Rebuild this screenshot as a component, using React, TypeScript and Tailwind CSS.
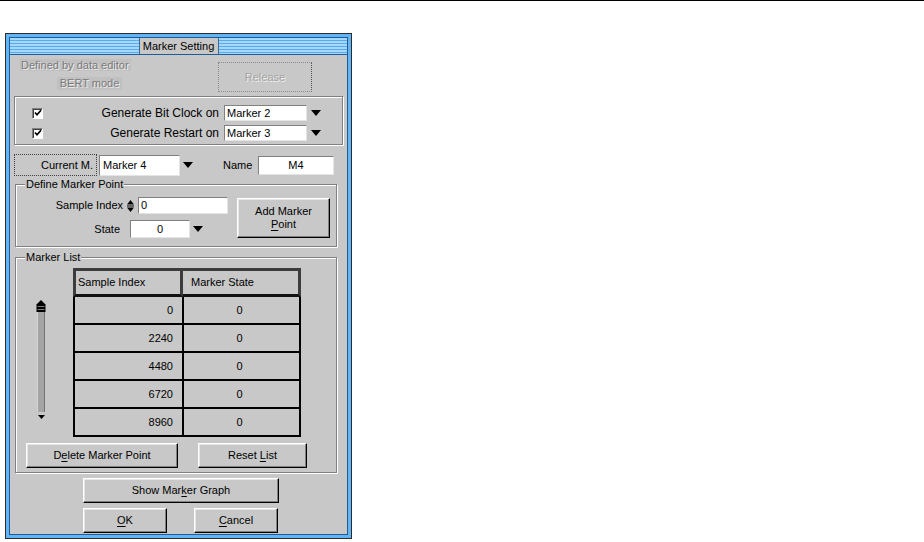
import React from "react";

const Arrow = () => (
  <svg width="10" height="6" viewBox="0 0 10 6" className="block">
    <polygon points="0,0 10,0 5,6" fill="#000" />
  </svg>
);

const Check = () => (
  <div className="w-[11px] h-[11px] bg-white border border-t-[#808080] border-l-[#808080] border-r-white border-b-white shadow-[inset_1px_1px_0_#404040] flex items-center justify-center">
    <svg width="8" height="8" viewBox="0 0 8 8" className="block">
      <path d="M1 3.5 L3 5.8 L7 1.2" fill="none" stroke="#000" strokeWidth="1.7" />
    </svg>
  </div>
);

const Btn = ({ className = "", children }: { className?: string; children: React.ReactNode }) => (
  <div
    className={
      "flex items-center justify-center text-center border border-t-white border-l-white border-r-black border-b-black shadow-[inset_-1px_-1px_0_#808080,inset_1px_1px_0_#e6e6e6] " +
      className
    }
  >
    {children}
  </div>
);

const Field = ({ className = "", children }: { className?: string; children?: React.ReactNode }) => (
  <div
    className={
      "flex items-center bg-white border border-t-[#808080] border-l-[#808080] border-r-[#e4e4e4] border-b-[#e4e4e4] " +
      className
    }
  >
    {children}
  </div>
);

const Group = ({
  title,
  className = "",
  children,
}: {
  title?: string;
  className?: string;
  children: React.ReactNode;
}) => (
  <div
    className={
      "relative border border-[#808080] shadow-[inset_1px_1px_0_#ffffff,1px_1px_0_#ffffff] " + className
    }
  >
    {title && (
      <div className="absolute -top-[7px] left-[9px] bg-[#c8c8c8] px-[1px] leading-[13px]">{title}</div>
    )}
    {children}
  </div>
);

const rows = ["0", "2240", "4480", "6720", "8960"];

export default function App() {
  return (
    <div className="w-[924px] h-[542px] bg-white overflow-hidden text-[11px] text-black font-['Liberation_Sans',Arial,sans-serif] leading-[13px]">
      <div className="h-px bg-black" />
      <div className="ml-[5px] mt-[32px] w-[347px] border border-[#2c2c2c] bg-[#62b4f4] p-[3px]">
        <div className="border border-[#1f5c98] bg-[#c8c8c8] flex flex-col">
          {/* title bar */}
          <div className="h-[17px] border-b border-[#1f5c98] bg-[repeating-linear-gradient(to_bottom,#a6d8fc_0px,#a6d8fc_2px,#58acee_2px,#58acee_3px)] flex justify-center">
            <div className="w-[80px] h-full bg-[#c8c8c8] border-x border-[#3a6a9a] flex items-center justify-center">
              Marker Setting
            </div>
          </div>

          {/* body */}
          <div className="flex flex-col pb-[1px]">
            {/* row A */}
            <div className="h-[41px] flex">
              <div className="ml-[10px] w-[111px] flex flex-col">
                <div className="mt-[4px] h-[12px] bg-[#c0c0c0] px-[1px] flex items-center text-[#7a7a7a] [text-shadow:1px_1px_0_#ececec]">
                  Defined by data editor
                </div>
                <div className="mt-[6px] ml-[37px] w-[65px] h-[13px] bg-[#c0c0c0] flex items-center justify-center text-[#7a7a7a] [text-shadow:1px_1px_0_#ececec]">
                  BERT mode
                </div>
              </div>
              <div className="ml-[87px] mt-[7px] w-[94px] h-[30px] border border-dotted border-[#8a8a8a] border-r-solid border-r-[#505050] flex items-center justify-center text-[#a4a4a4] [text-shadow:1px_1px_0_#f0f0f0]">
                Release
              </div>
            </div>

            {/* group 1 */}
            <Group className="ml-[4px] w-[329px] h-[49px] flex flex-col">
              <div className="mt-[8px] h-[16px] flex items-center">
                <div className="ml-[17px]">
                  <Check />
                </div>
                <div className="w-[176px] text-right text-[12px]">Generate Bit Clock on</div>
                <Field className="ml-[5px] w-[83px] h-[16px] pl-[2px]">Marker 2</Field>
                <div className="ml-[4px]">
                  <Arrow />
                </div>
              </div>
              <div className="mt-[4px] h-[16px] flex items-center">
                <div className="ml-[17px]">
                  <Check />
                </div>
                <div className="w-[176px] text-right text-[12px]">Generate Restart on</div>
                <Field className="ml-[5px] w-[83px] h-[16px] pl-[2px]">Marker 3</Field>
                <div className="ml-[4px]">
                  <Arrow />
                </div>
              </div>
            </Group>

            {/* current marker row */}
            <div className="mt-[9px] h-[22px] flex items-center">
              <div className="ml-[4px] w-[83px] h-[22px] border border-dotted border-[#404040] border-r-solid flex items-center justify-end pr-[3px]">
                Current M.
              </div>
              <Field className="ml-[2px] w-[81px] h-[21px] pl-[3px]">Marker 4</Field>
              <div className="ml-[3px]">
                <Arrow />
              </div>
              <div className="ml-[30px] w-[29px]">Name</div>
              <Field className="ml-[6px] w-[76px] h-[19px] justify-center">M4</Field>
            </div>

            {/* define marker point */}
            <Group title="Define Marker Point" className="mt-[8px] ml-[5px] w-[322px] h-[63px] flex pt-[12px]">
              <div className="flex flex-col">
                <div className="h-[17px] flex items-center">
                  <div className="w-[107px] text-right">Sample Index</div>
                  <svg width="7" height="14" viewBox="0 0 7 14" className="ml-[4px] block">
                    <polygon points="0,5.5 3.5,1 7,5.5" fill="#000" />
                    <rect x="0" y="6.5" width="7" height="1" fill="#000" />
                    <polygon points="0,8.5 7,8.5 3.5,13" fill="#000" />
                  </svg>
                  <Field className="ml-[4px] w-[90px] h-[17px] pl-[2px]">0</Field>
                </div>
                <div className="mt-[6px] h-[18px] flex items-center">
                  <div className="w-[104px] text-right">State</div>
                  <Field className="ml-[10px] w-[60px] h-[18px] justify-center">0</Field>
                  <div className="ml-[3px]">
                    <Arrow />
                  </div>
                </div>
              </div>
              <Btn className="ml-[9px] mt-[1px] w-[93px] h-[40px] flex-col leading-[13px]">
                <span>Add Marker</span>
                <span>
                  <span className="underline underline-offset-2">P</span>oint
                </span>
              </Btn>
            </Group>

            {/* marker list */}
            <Group title="Marker List" className="mt-[10px] ml-[5px] w-[322px] h-[216px] flex flex-col pt-[10px]">
              <div className="flex">
                {/* slider */}
                <div className="ml-[19px] mt-[32px] w-[12px] flex flex-col items-center">
                  <svg width="12" height="12" viewBox="0 0 12 12" className="block">
                    <polygon points="6,0 10,4 2,4" fill="#000" />
                    <rect x="1.5" y="4" width="9" height="8" fill="#000" />
                    <rect x="2.5" y="6" width="7" height="1" fill="#7a7a7a" />
                    <rect x="2.5" y="9" width="7" height="1" fill="#7a7a7a" />
                  </svg>
                  <div className="w-[8px] h-[100px] bg-[#a4a4a4] border-l border-[#d4d4d4] border-r border-r-[#747474]" />
                  <svg width="7" height="4" viewBox="0 0 7 4" className="block mt-[3px]">
                    <polygon points="0,0 7,0 3.5,4" fill="#000" />
                  </svg>
                </div>
                {/* table */}
                <div className="ml-[26px] w-[228px] flex flex-col">
                  <div className="flex h-[29px]">
                    <div className="w-[110px] border-[3px] border-[#3c3c3c] border-b-[#111111] flex items-center pl-[2px]">
                      Sample Index
                    </div>
                    <div className="w-[118px] border-[3px] border-l-0 border-[#3c3c3c] border-b-[#111111] flex items-center pl-[8px]">
                      Marker State
                    </div>
                  </div>
                  {rows.map((v) => (
                    <div key={v} className="flex h-[28px] border-b-2 border-black">
                      <div className="w-[109px] border-l-2 border-black flex items-center justify-end pr-[9px]">{v}</div>
                      <div className="w-[119px] border-l-2 border-r-2 border-black flex items-center justify-center pr-[4px]">
                        0
                      </div>
                    </div>
                  ))}
                </div>
              </div>
              <div className="mt-[6px] h-[25px] flex">
                <Btn className="ml-[10px] w-[152px] h-[25px]">
                  <span>
                    D<span className="underline underline-offset-2">e</span>lete Marker Point
                  </span>
                </Btn>
                <Btn className="ml-[20px] w-[109px] h-[25px]">
                  <span>
                    Reset <span className="underline underline-offset-2">L</span>ist
                  </span>
                </Btn>
              </div>
            </Group>

            {/* bottom buttons */}
            <div className="mt-[5px] flex">
              <Btn className="ml-[73px] w-[196px] h-[25px]">
                <span>
                  Show Mar<span className="underline underline-offset-2">k</span>er Graph
                </span>
              </Btn>
            </div>
            <div className="mt-[5px] flex">
              <Btn className="ml-[73px] w-[84px] h-[25px]">
                <span>
                  <span className="underline underline-offset-2">O</span>K
                </span>
              </Btn>
              <Btn className="ml-[27px] w-[84px] h-[25px]">
                <span>
                  <span className="underline underline-offset-2">C</span>ancel
                </span>
              </Btn>
            </div>
          </div>
        </div>
      </div>
    </div>
  );
}
